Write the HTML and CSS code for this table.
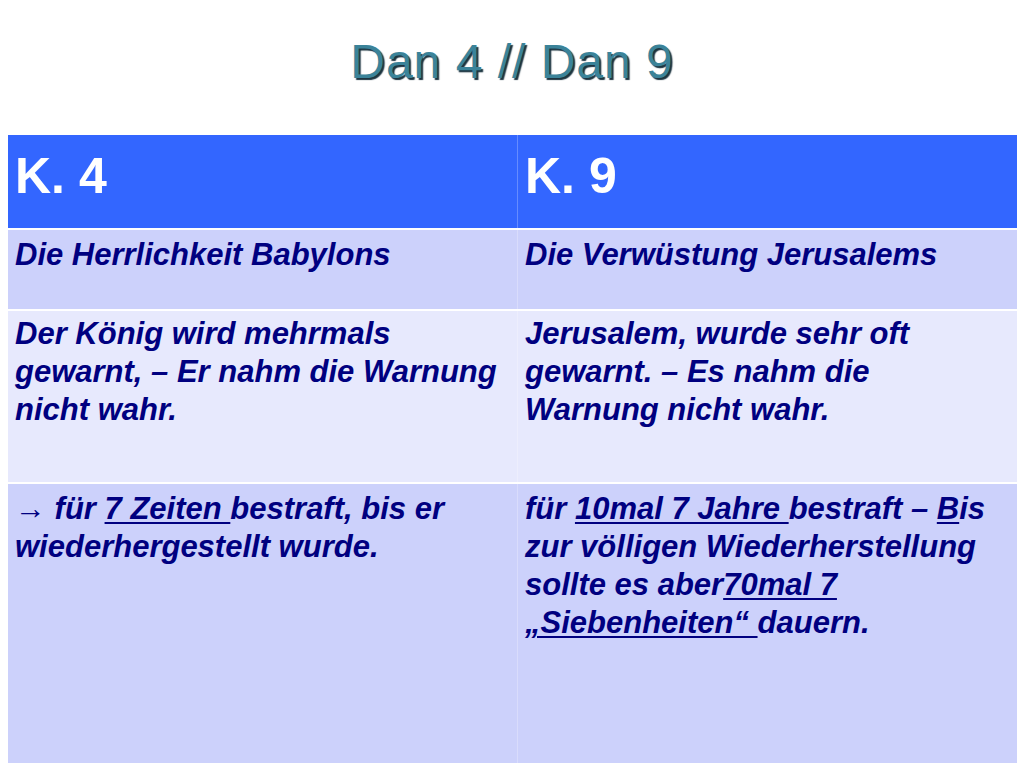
FILE: index.html
```html
<!DOCTYPE html>
<html lang="de">
<head>
<meta charset="utf-8">
<title>Dan 4 // Dan 9</title>
<link rel="stylesheet" href="styles.css">
</head>
<body>
<div class="slide">
  <h1 class="title">Dan 4 // Dan 9</h1>
  <div class="table">
    <div class="cell head">K. 4</div>
    <div class="cell head">K. 9</div>
    <div class="cell r1">Die Herrlichkeit Babylons</div>
    <div class="cell r1">Die Verwüstung Jerusalems</div>
    <div class="cell r2">Der König wird mehrmals gewarnt, – Er nahm die Warnung nicht wahr.</div>
    <div class="cell r2">Jerusalem, wurde sehr oft gewarnt. – Es nahm die Warnung nicht wahr.</div>
    <div class="cell r3"><span class="arrow">→</span> für <u>7 Zeiten </u>bestraft, bis er wiederhergestellt wurde.</div>
    <div class="cell r3">für <u>10mal 7 Jahre </u>bestraft – <u>B</u>is zur völligen Wiederherstellung sollte es aber<u>70mal 7</u> <u>„Siebenheiten“ </u>dauern.</div>
  </div>
</div>
</body>
</html>
```
FILE: styles.css
```css
html, body {
  margin: 0;
  padding: 0;
  background: #ffffff;
}
.slide {
  width: 1024px;
  height: 768px;
  font-family: "Liberation Sans", Arial, sans-serif;
  overflow: hidden;
}
.title {
  margin: 0;
  height: 135px;
  box-sizing: border-box;
  padding-top: 38px;
  text-align: center;
  font-size: 48px;
  font-weight: normal;
  line-height: 1;
  letter-spacing: 1px;
  color: #3b8399;
  text-shadow: 2px 2px 1px #1c3440;
}
.table {
  margin-left: 8px;
  display: grid;
  grid-template-columns: 509px 500px;
  grid-template-rows: 93px 79px 171px 279px;
  column-gap: 0;
  row-gap: 2px;
}
.cell {
  box-sizing: border-box;
  padding: 4px 6px 0 7px;
  font-size: 31px;
  font-weight: bold;
  font-style: italic;
  line-height: 38px;
  color: #000080;
}
.cell:nth-child(even) {
  padding-left: 8px;
  box-shadow: inset 1px 0 0 rgba(255, 255, 255, 0.25);
}
.head {
  background: #3366ff;
  color: #ffffff;
  font-style: normal;
  font-size: 50px;
  line-height: 56px;
  padding-top: 13px;
}
.r1, .r3 {
  background: #ccd1fb;
}
.r2 {
  background: #e7e9fd;
}
.r1 {
  padding-top: 6px;
}
.r3 {
  padding-top: 6px;
}
.arrow {
  font-style: normal;
  font-weight: normal;
}
u {
  text-decoration-thickness: 2px;
  text-underline-offset: 3px;
}
```
